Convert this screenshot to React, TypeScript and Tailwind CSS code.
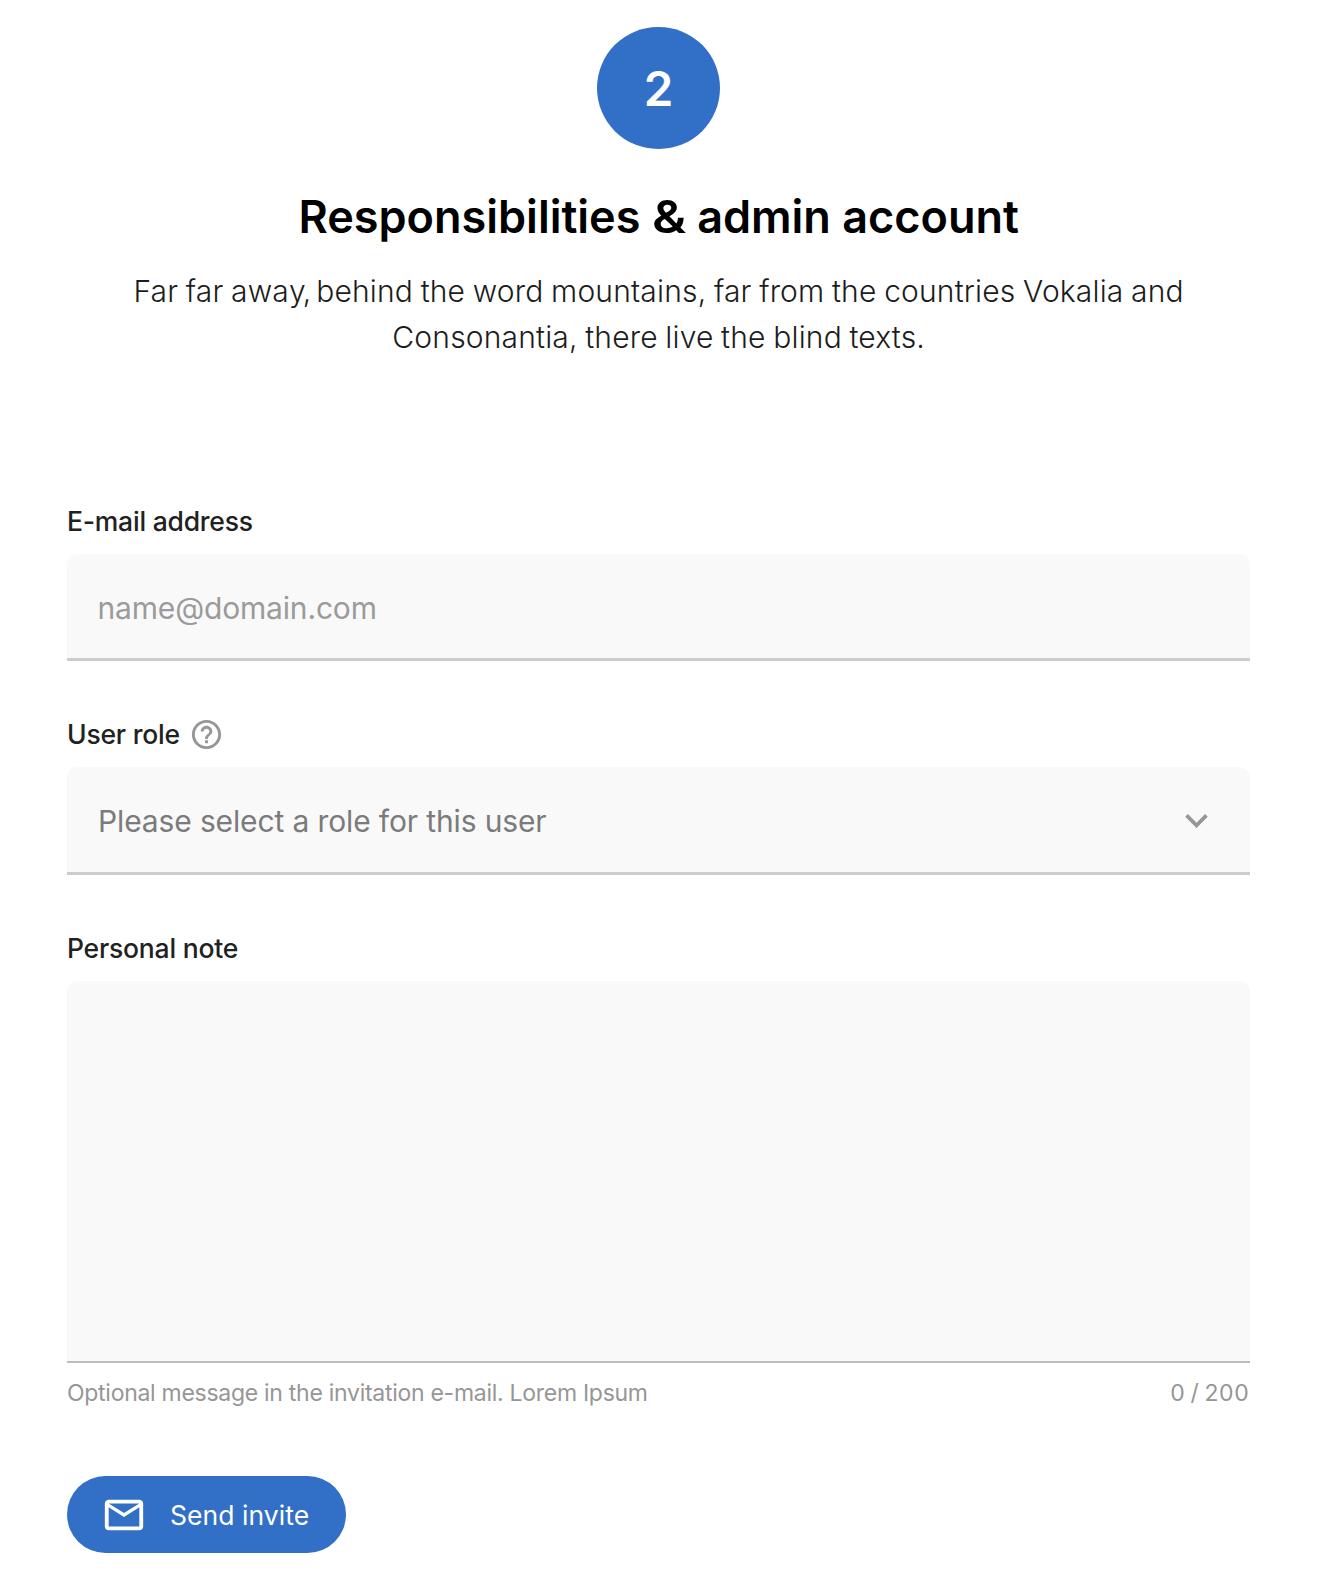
import type { ReactNode } from "react";

function FieldLabel({ htmlFor, children }: { htmlFor: string; children: ReactNode }) {
  return (
    <div className="mb-[14px] flex h-[38px] items-center">
      <label htmlFor={htmlFor} className="text-[26.5px] leading-[38px] font-medium tracking-[-0.22px] text-[#212121]">
        {children}
      </label>
    </div>
  );
}

function HelpIcon() {
  return (
    <svg viewBox="0 0 24 24" className="ml-[9px] h-[35px] w-[35px] shrink-0 fill-[#969696]" aria-label="Help">
      <path d="M11 18h2v-2h-2v2zm1-16C6.48 2 2 6.48 2 12s4.48 10 10 10 10-4.48 10-10S17.52 2 12 2zm0 18c-4.41 0-8-3.59-8-8s3.59-8 8-8 8 3.59 8 8-3.59 8-8 8zm0-14c-2.21 0-4 1.79-4 4h2c0-1.1.9-2 2-2s2 .9 2 2c0 2-3 1.75-3 5h2c0-2.25 3-2.5 3-5 0-2.21-1.79-4-4-4z" />
    </svg>
  );
}

function ChevronIcon() {
  return (
    <svg viewBox="0 0 24 24" className="mt-px h-[45px] w-[45px] shrink-0 fill-[#969696]" aria-hidden="true">
      <path d="M16.59 8.59 12 13.17 7.41 8.59 6 10l6 6 6-6z" />
    </svg>
  );
}

function MailIcon() {
  return (
    <svg viewBox="0 0 24 24" className="h-[46px] w-[46px] shrink-0 fill-white" aria-hidden="true">
      <path d="M22 6c0-1.1-.9-2-2-2H4c-1.1 0-2 .9-2 2v12c0 1.1.9 2 2 2h16c1.1 0 2-.9 2-2V6zm-2 0-8 5-8-5h16zm0 12H4V8l8 5 8-5v10z" />
    </svg>
  );
}

export default function App() {
  return (
    <main className="min-h-[1588px] w-full bg-white pt-[26.7px] font-[Inter,sans-serif]">
      <header className="flex w-[1317.3px] flex-col items-center">
        <div className="flex h-[122.7px] w-[122.7px] items-center justify-center rounded-full bg-[#3170c6] pt-px text-[47.5px] leading-[56px] font-semibold text-white">
          2
        </div>
        <h1 className="mt-[40.3px] text-[45px] leading-[54px] font-semibold whitespace-nowrap text-black">
          Responsibilities <span className="inline-block w-[37px] origin-left scale-x-115">&amp;</span> <span className="-ml-[3px]">admin account</span>
        </h1>
        <p className="mt-6 text-center text-[30px] leading-[46px] font-light tracking-[0.17px] [word-spacing:-1px] whitespace-nowrap text-[#1c1c1c]">
          Far far awa<span className="tracking-[-3px]">y</span><span className="tracking-[-1.2px]">, </span>behind the word mountains, far from the countries Vokalia and
          <br />
          Consonantia, there live the blind texts.
        </p>
      </header>

      <form className="mt-[142px] ml-[67px] w-[1183.3px]" onSubmit={(e) => e.preventDefault()}>
        <div className="mb-[54.3px]">
          <FieldLabel htmlFor="email">E-mail address</FieldLabel>
          <input
            id="email"
            type="email"
            placeholder="name@domain.com"
            className="block h-[107.5px] w-full rounded-t-[10px] border-b-3 border-[#cccccc] bg-[#f9f9f9] px-[30.5px] pt-[5px] text-[30px] tracking-[-0.17px] outline-none placeholder:text-[#9b9b9b]"
          />
        </div>

        <div className="mb-[54.3px]">
          <div className="flex">
            <FieldLabel htmlFor="role">User role</FieldLabel>
            <div className="flex h-[39px] items-center">
              <HelpIcon />
            </div>
          </div>
          <button
            id="role"
            type="button"
            className="flex h-[107.5px] w-full items-center justify-between rounded-t-[10px] border-b-3 border-[#cccccc] bg-[#f9f9f9] pr-[31px] pl-[31px] text-[30px] tracking-[-0.13px] text-[#7b7b7b]"
          >
            <span className="pt-[3px]">Please select a role for this user</span>
            <ChevronIcon />
          </button>
        </div>

        <div>
          <FieldLabel htmlFor="note">Personal note</FieldLabel>
          <textarea
            id="note"
            className="block h-[381.5px] w-full resize-none rounded-t-[10px] border-b-2 border-[#bdbdbd] bg-[#f9f9f9] p-[30px] text-[30px] outline-none"
          />
          <div className="mt-4 flex justify-between pr-px text-[23px] leading-7 text-[#969696]">
            <span className="tracking-[-0.28px]">Optional message in the invitation e-mail. Lorem Ipsum</span>
            <span className="tracking-[0.6px] [word-spacing:-2px]">0 / 200</span>
          </div>
        </div>

        <button
          type="submit"
          className="mt-[69.7px] flex h-[77px] w-[279px] items-center gap-[23px] rounded-full bg-[#3170c6] pl-[34px] text-[26.5px] tracking-[0.05px] text-white"
        >
          <MailIcon />
          <span className="pt-px">Send invite</span>
        </button>
      </form>
    </main>
  );
}
